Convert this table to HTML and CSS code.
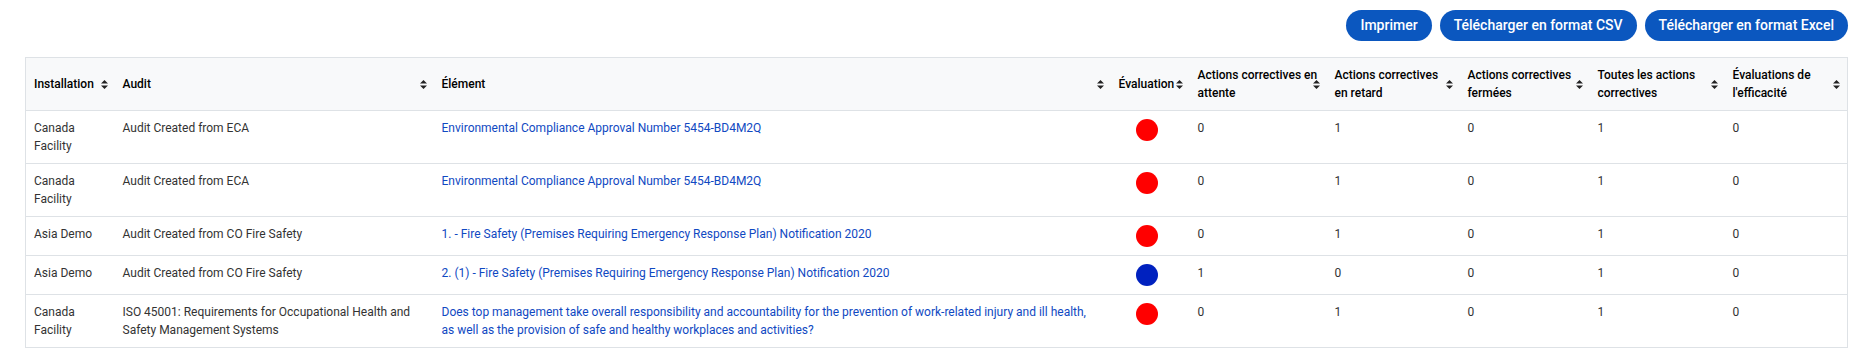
FILE: index.html
```html
<!DOCTYPE html>
<html lang="fr">
<head>
<meta charset="utf-8">
<title>Rapport d'audit</title>
<link rel="stylesheet" href="styles.css">
</head>
<body>
<div class="page">
  <div class="toolbar">
    <button class="btn">Imprimer</button>
    <button class="btn">Télécharger en format CSV</button>
    <button class="btn">Télécharger en format Excel</button>
  </div>
  <table class="report">
    <colgroup>
      <col class="c-inst"><col class="c-audit"><col class="c-elem"><col class="c-eval"><col class="c-att"><col class="c-ret"><col class="c-ferm"><col class="c-tout"><col class="c-eff">
    </colgroup>
    <thead>
      <tr>
        <th>Installation<svg class="sort" viewBox="0 0 7 9"><path d="M0 3.6 3.5 0 7 3.6Z M0 5.4 3.5 9 7 5.4Z"/></svg></th>
        <th>Audit<svg class="sort" viewBox="0 0 7 9"><path d="M0 3.6 3.5 0 7 3.6Z M0 5.4 3.5 9 7 5.4Z"/></svg></th>
        <th>Élément<svg class="sort" viewBox="0 0 7 9"><path d="M0 3.6 3.5 0 7 3.6Z M0 5.4 3.5 9 7 5.4Z"/></svg></th>
        <th>Évaluation<svg class="sort" viewBox="0 0 7 9"><path d="M0 3.6 3.5 0 7 3.6Z M0 5.4 3.5 9 7 5.4Z"/></svg></th>
        <th>Actions correctives en attente<svg class="sort" viewBox="0 0 7 9"><path d="M0 3.6 3.5 0 7 3.6Z M0 5.4 3.5 9 7 5.4Z"/></svg></th>
        <th>Actions correctives en retard<svg class="sort" viewBox="0 0 7 9"><path d="M0 3.6 3.5 0 7 3.6Z M0 5.4 3.5 9 7 5.4Z"/></svg></th>
        <th>Actions correctives fermées<svg class="sort" viewBox="0 0 7 9"><path d="M0 3.6 3.5 0 7 3.6Z M0 5.4 3.5 9 7 5.4Z"/></svg></th>
        <th>Toutes les actions correctives<svg class="sort" viewBox="0 0 7 9"><path d="M0 3.6 3.5 0 7 3.6Z M0 5.4 3.5 9 7 5.4Z"/></svg></th>
        <th>Évaluations de l'efficacité<svg class="sort" viewBox="0 0 7 9"><path d="M0 3.6 3.5 0 7 3.6Z M0 5.4 3.5 9 7 5.4Z"/></svg></th>
      </tr>
    </thead>
    <tbody>
      <tr>
        <td>Canada Facility</td>
        <td>Audit Created from ECA</td>
        <td class="elem"><a href="#">Environmental Compliance Approval Number 5454-BD4M2Q</a></td>
        <td class="eval"><span class="dot red"></span></td>
        <td>0</td><td>1</td><td>0</td><td>1</td><td>0</td>
      </tr>
      <tr>
        <td>Canada Facility</td>
        <td>Audit Created from ECA</td>
        <td class="elem"><a href="#">Environmental Compliance Approval Number 5454-BD4M2Q</a></td>
        <td class="eval"><span class="dot red"></span></td>
        <td>0</td><td>1</td><td>0</td><td>1</td><td>0</td>
      </tr>
      <tr>
        <td>Asia Demo</td>
        <td>Audit Created from CO Fire Safety</td>
        <td class="elem"><a href="#">1. - Fire Safety (Premises Requiring Emergency Response Plan) Notification 2020</a></td>
        <td class="eval"><span class="dot red"></span></td>
        <td>0</td><td>1</td><td>0</td><td>1</td><td>0</td>
      </tr>
      <tr>
        <td>Asia Demo</td>
        <td>Audit Created from CO Fire Safety</td>
        <td class="elem"><a href="#">2. (1) - Fire Safety (Premises Requiring Emergency Response Plan) Notification 2020</a></td>
        <td class="eval"><span class="dot blue"></span></td>
        <td>1</td><td>0</td><td>0</td><td>1</td><td>0</td>
      </tr>
      <tr>
        <td>Canada Facility</td>
        <td>ISO 45001: Requirements for Occupational Health and Safety Management Systems</td>
        <td class="elem"><a href="#">Does top management take overall responsibility and accountability for the prevention of work-related injury and ill health, as well as the provision of safe and healthy workplaces and activities?</a></td>
        <td class="eval"><span class="dot red"></span></td>
        <td>0</td><td>1</td><td>0</td><td>1</td><td>0</td>
      </tr>
    </tbody>
  </table>
</div>
</body>
</html>
```

FILE: styles.css
```css
* { box-sizing: border-box; }
html, body { margin: 0; padding: 0; background: #fff; }
body {
  font-family: Roboto, "Liberation Sans", Arial, sans-serif;
  font-size: 12px;
  line-height: 18px;
  color: #333;
}
.page {
  padding: 10px 20px 0 25px;
}
.toolbar {
  display: flex;
  justify-content: flex-end;
  gap: 8px;
  margin-bottom: 16px;
}
.btn {
  font-family: Roboto, "Liberation Sans", Arial, sans-serif;
  font-size: 14px;
  font-weight: 500;
  line-height: 21px;
  color: #fff;
  background: #0b57bf;
  border: 0;
  border-radius: 16px;
  padding: 5px 14px;
  height: 31px;
  cursor: pointer;
}
.report {
  width: 1823px;
  table-layout: fixed;
  border-collapse: collapse;
  border: 1px solid #dee2e6;
}
.c-inst { width: 89px; }
.c-audit { width: 319px; }
.c-elem { width: 677px; }
.c-eval { width: 79px; }
.c-att { width: 137px; }
.c-ret { width: 133px; }
.c-ferm { width: 130px; }
.c-tout { width: 135px; }
.c-eff { width: 123px; }
.report th {
  position: relative;
  background: #f8f9fa;
  color: #000;
  font-weight: 500;
  text-align: left;
  vertical-align: middle;
  padding: 8px;
  height: 53px;
  border-bottom: 1px solid #dee2e6;
}
.sort {
  position: absolute;
  right: 7px;
  top: 50%;
  width: 7px;
  height: 9px;
  margin-top: -4px;
  fill: #222;
}
.report td {
  vertical-align: top;
  padding: 8px;
  border-bottom: 1px solid #dee2e6;
}
.report td.elem {
  padding-right: 24px;
}
.report td.eval {
  text-align: center;
  padding-right: 15px;
}
.report a {
  color: #1049c2;
  text-decoration: none;
}
.dot {
  display: inline-block;
  width: 22px;
  height: 22px;
  border-radius: 50%;
  vertical-align: top;
}
.dot.red { background: #ff0000; }
.dot.blue { background: #0021bf; }
```
